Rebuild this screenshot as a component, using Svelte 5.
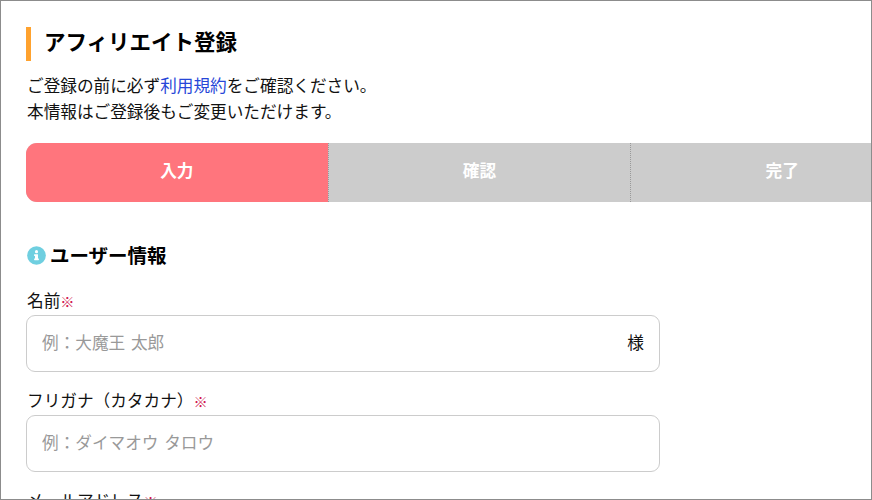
<script>
    const steps = ["入力", "確認", "完了"];
    let current = 0;
    let fields = [
        { id: "name", label: "名前", placeholder: "例：大魔王 太郎", suffix: "様", value: "" },
        { id: "kana", label: "フリガナ（カタカナ）", placeholder: "例：ダイマオウ タロウ", suffix: "", value: "" },
        { id: "mail", label: "メールアドレス", placeholder: "", suffix: "", value: "" },
    ];
</script>

<style>
    :global(body) {
        margin: 0;
        overflow: hidden;
    }
    .page {
        box-sizing: border-box;
        width: 872px;
        height: 500px;
        padding: 26px 25px 0;
        border: 1px solid #8c8c8c;
        overflow: hidden;
        background: #fff;
        color: #111;
        font-family: "Noto Sans CJK JP", sans-serif;
        font-size: 16.65px;
        line-height: 26px;
    }
    h1 {
        box-sizing: border-box;
        height: 34px;
        margin: 0 0 11px;
        padding-left: 13px;
        border-left: 5px solid #ffa22e;
        color: #000;
        font-size: 21.5px;
        line-height: 28px;
    }
    p {
        margin: 0;
        padding-left: 1px;
    }
    a {
        color: #2747d8;
        text-decoration: none;
    }
    .steps {
        display: flex;
        width: 907px;
        height: 59px;
        margin: 19px 0 0;
        padding: 0;
        border-radius: 11px;
        overflow: hidden;
        background: #ccc;
        list-style: none;
    }
    .steps li {
        box-sizing: border-box;
        flex: 1;
        border-right: 1px dotted #999;
        background-clip: padding-box;
        color: #fff;
        font-weight: bold;
        line-height: 55px;
        text-align: center;
    }
    .steps li:last-child {
        border-right: 0;
    }
    .steps li.active {
        background-color: #ff757d;
    }
    h2 {
        display: flex;
        align-items: center;
        gap: 4px;
        margin: 38px 0 17px;
        padding-left: 1px;
        color: #000;
        font-size: 19.5px;
        line-height: 30px;
    }
    h2 svg {
        width: 19px;
        height: 19px;
    }
    .field {
        width: 634px;
        margin-bottom: 15px;
    }
    label {
        display: block;
        height: 28px;
        padding-left: 1px;
    }
    .required {
        color: #d0164f;
        font-size: 14.2px;
    }
    .box {
        display: flex;
        align-items: center;
        box-sizing: border-box;
        height: 57px;
        padding: 0 15px 4px;
        border: 1px solid #ccc;
        border-radius: 9px;
    }
    input {
        flex: 1;
        min-width: 0;
        padding: 0;
        border: 0;
        outline: 0;
        background: none;
        color: inherit;
        font: inherit;
        word-spacing: 2px;
    }
    input::placeholder {
        color: #999;
        opacity: 1;
    }
</style>

<div class="page">
    <h1>アフィリエイト登録</h1>
    <p>ご登録の前に必ず<a href="#terms">利用規約</a>をご確認ください。<br />本情報はご登録後もご変更いただけます。</p>
    <ol class="steps">
        {#each steps as step, i}
            <li class:active={i === current}>{step}</li>
        {/each}
    </ol>
    <h2>
        <svg viewBox="0 0 512 512" aria-hidden="true">
            <circle cx="256" cy="256" r="252" fill="#6fcfe0" />
            <circle cx="256" cy="152" r="42" fill="#fff" />
            <path
                fill="#fff"
                d="M204 224h80c7 0 12 5 12 12v100h12c7 0 12 5 12 12v24c0 7-5 12-12 12H204c-7 0-12-5-12-12v-24c0-7 5-12 12-12h12v-64h-12c-7 0-12-5-12-12v-24c0-7 5-12 12-12z"
            />
        </svg>
        ユーザー情報
    </h2>
    <form>
        {#each fields as field}
            <div class="field">
                <label for={field.id}>{field.label}<span class="required">※</span></label>
                <div class="box">
                    <input id={field.id} type="text" placeholder={field.placeholder} bind:value={field.value} />
                    {#if field.suffix}
                        <span>{field.suffix}</span>
                    {/if}
                </div>
            </div>
        {/each}
    </form>
</div>
